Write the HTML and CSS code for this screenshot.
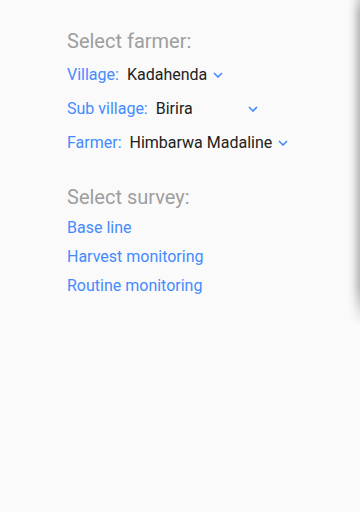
FILE: index.html
```html
<!DOCTYPE html>
<html>
<head>
<meta charset="utf-8">
<link rel="stylesheet" href="styles.css">
</head>
<body>
<div class="page">
  <h2 class="title">Select farmer:</h2>
  <div class="row">
    <span class="label">Village:</span>
    <span class="dropdown">
      <span class="value">Kadahenda</span>
      <svg class="chev" width="10" height="6" viewBox="0 0 10 6"><polyline points="1,1 5,5 9,1" fill="none" stroke="#448aff" stroke-width="1.6"/></svg>
    </span>
  </div>
  <div class="row">
    <span class="label">Sub village:</span>
    <span class="dropdown">
      <span class="value wide">Birira</span>
      <svg class="chev" width="10" height="6" viewBox="0 0 10 6"><polyline points="1,1 5,5 9,1" fill="none" stroke="#448aff" stroke-width="1.6"/></svg>
    </span>
  </div>
  <div class="row">
    <span class="label">Farmer:</span>
    <span class="dropdown">
      <span class="value">Himbarwa Madaline</span>
      <svg class="chev" width="10" height="6" viewBox="0 0 10 6"><polyline points="1,1 5,5 9,1" fill="none" stroke="#448aff" stroke-width="1.6"/></svg>
    </span>
  </div>
  <h2 class="title survey">Select survey:</h2>
  <ul class="surveys">
    <li>Base line</li>
    <li>Harvest monitoring</li>
    <li>Routine monitoring</li>
  </ul>
</div>
<div class="edge"></div>
</body>
</html>
```
FILE: styles.css
```css
html, body {
  margin: 0;
  padding: 0;
  width: 360px;
  height: 512px;
  overflow: hidden;
  background: #fafafa;
}
body {
  font-family: Roboto, "Noto Sans", sans-serif;
  position: relative;
}
.page {
  padding: 29px 0 0 67px;
}
.title {
  margin: 0;
  font-size: 20px;
  font-weight: 400;
  line-height: 24px;
  color: #9e9e9e;
}
.row {
  display: flex;
  align-items: center;
  height: 34px;
  font-size: 16px;
}
.row:first-of-type { margin-top: 4px; }
.label {
  color: #448aff;
  margin-right: 8px;
}
.dropdown {
  display: flex;
  align-items: center;
}
.value {
  color: #212121;
}
.value.wide {
  min-width: 86px;
}
.chev {
  margin-left: 6px;
  margin-top: 1px;
}
.survey {
  margin-top: 26px;
}
.surveys {
  list-style: none;
  margin: 4px 0 0;
  padding: 0;
}
.surveys li {
  color: #448aff;
  font-size: 16px;
  line-height: 29px;
}
.edge {
  position: absolute;
  right: 0;
  top: 0;
  width: 12px;
  height: 325px;
  background: linear-gradient(to right, rgba(0,0,0,0), rgba(0,0,0,0.06) 40%, rgba(0,0,0,0.26));
  -webkit-mask-image: linear-gradient(to bottom, rgba(0,0,0,0.6), #000 4%, #000 88%, transparent);
  mask-image: linear-gradient(to bottom, rgba(0,0,0,0.6), #000 4%, #000 88%, transparent);
}
```
